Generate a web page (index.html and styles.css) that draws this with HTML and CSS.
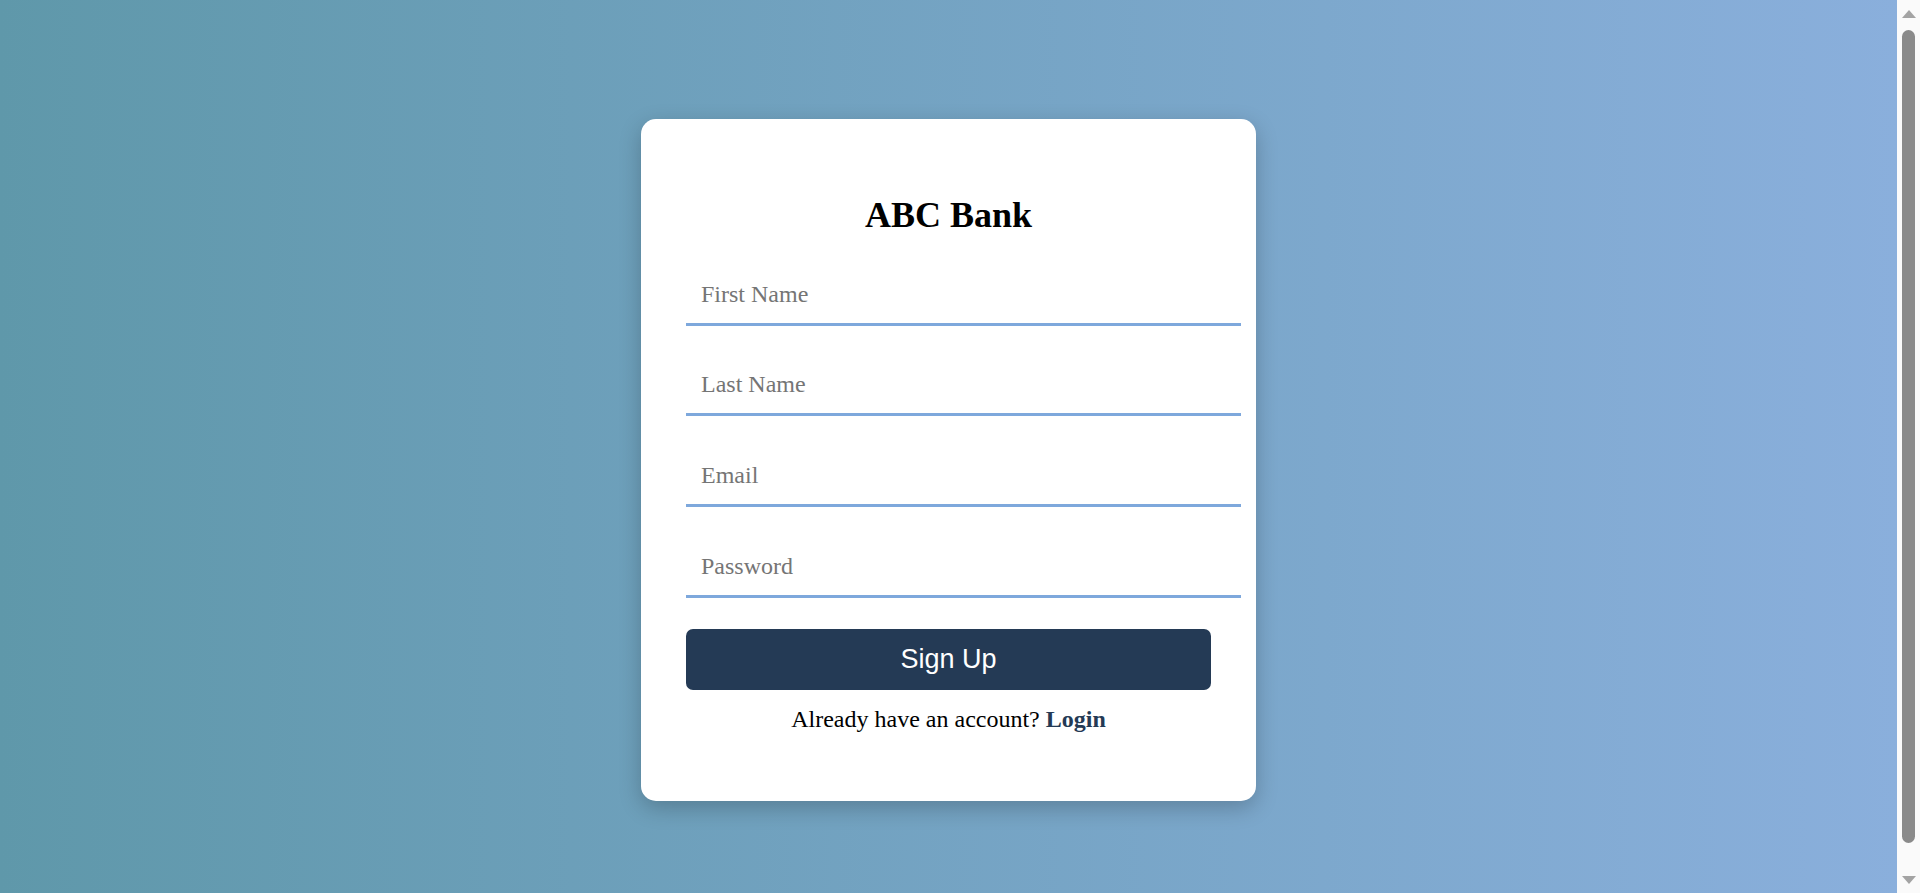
FILE: index.html
```html
<!DOCTYPE html>
<html lang="en">
<head>
<meta charset="utf-8">
<title>ABC Bank - Sign Up</title>
<link rel="stylesheet" href="styles.css">
</head>
<body>
  <main class="page">
    <section class="card">
      <h2 class="title">ABC Bank</h2>
      <form class="form">
        <input class="field" type="text" placeholder="First Name">
        <input class="field" type="text" placeholder="Last Name">
        <input class="field" type="email" placeholder="Email">
        <input class="field" type="password" placeholder="Password">
        <button class="btn" type="button">Sign Up</button>
      </form>
      <p class="switch">Already have an account? <a class="login" href="#">Login</a></p>
    </section>
  </main>
  <div class="scrollbar">
    <div class="arrow arrow-up"></div>
    <div class="thumb"></div>
    <div class="spacer"></div>
    <div class="arrow arrow-down"></div>
  </div>
</body>
</html>
```
FILE: styles.css
```css
html, body {
  margin: 0;
  padding: 0;
  height: 100%;
}

body {
  display: flex;
  overflow: hidden;
  font-family: "Liberation Serif", "Times New Roman", serif;
  font-size: 24px;
  color: #000;
}

.page {
  flex: 1;
  display: flex;
  justify-content: center;
  align-items: flex-start;
  padding-top: 119px;
  background: linear-gradient(to right, #5f98aa 0%, #8aafdc 100%);
}

.card {
  width: 525px;
  padding: 45px;
  background: #fff;
  border-radius: 15px;
  box-shadow: 0 7px 22px rgba(0, 0, 0, 0.22);
}

.title {
  margin: 30px 0 29.5px;
  font-size: 36px;
  font-weight: bold;
  text-align: center;
}

.form {
  display: flex;
  flex-direction: column;
  align-items: flex-start;
  gap: 30.8px;
}

.field {
  box-sizing: content-box;
  width: 525px;
  margin: 0;
  padding: 15px;
  border: none;
  border-bottom: 3px solid #7ea8dc;
  outline: none;
  background: transparent;
  font-family: "Liberation Serif", "Times New Roman", serif;
  font-size: 24px;
  line-height: normal;
  color: #000;
}

.field::placeholder {
  color: #757575;
}

.btn {
  width: 525px;
  margin: 0;
  padding: 15px;
  border: none;
  border-radius: 7px;
  background: #243a55;
  color: #fff;
  font-family: "Liberation Sans", Arial, sans-serif;
  font-size: 27px;
  line-height: normal;
  cursor: pointer;
}

.switch {
  margin: 16px 0 23.5px;
  text-align: center;
}

.login {
  color: #243a55;
  font-weight: bold;
  text-decoration: none;
}

.scrollbar {
  width: 23px;
  flex: none;
  display: flex;
  flex-direction: column;
  align-items: center;
  background: #fafafa;
  padding: 10px 0 9px;
  box-sizing: border-box;
}

.arrow {
  width: 0;
  height: 0;
  border-left: 7px solid transparent;
  border-right: 7px solid transparent;
}

.arrow-up {
  border-bottom: 8px solid #a3a3a3;
}

.arrow-down {
  border-top: 8px solid #a3a3a3;
}

.thumb {
  width: 13px;
  height: 813px;
  margin-top: 12px;
  border-radius: 7px;
  background: #8a8a8a;
}

.spacer {
  flex: 1;
}
```
